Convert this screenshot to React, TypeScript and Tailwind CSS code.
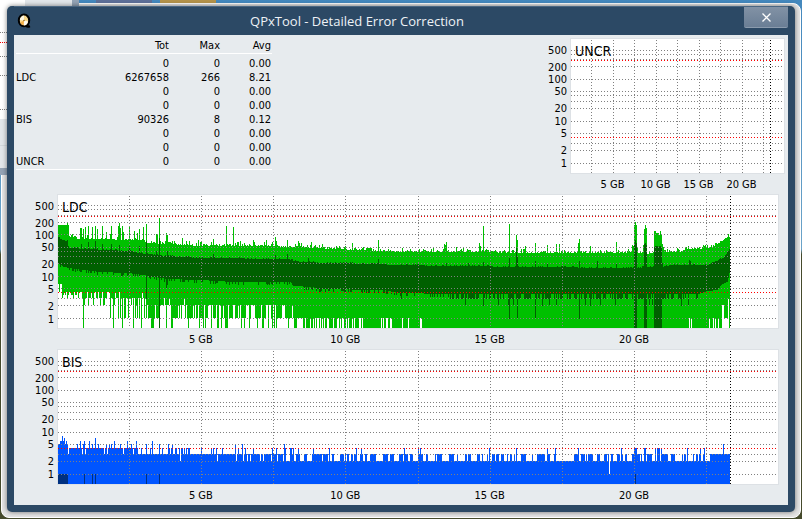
import clsx from "clsx";

type Point = [number, number];

type Band = { top: number; bottom: number };

type PlotProps = {
  title: string;
  width: number;
  height: number;
  gridX: number[];
  endX: number;
  gridY: number[];
  limitY: number[];
  children?: React.ReactNode;
  className?: string;
};

const COLUMNS = 672;

const SCALE = [
  { label: "500", className: "mt-[5px]" },
  { label: "200", className: "mt-[5px]" },
  { label: "100", className: "" },
  { label: "50", className: "" },
  { label: "20", className: "mt-[5px]" },
  { label: "10", className: "mt-px" },
  { label: "5", className: "" },
  { label: "2", className: "mt-[5px]" },
  { label: "1", className: "mt-px" },
];

const CAPACITY = ["5 GB", "10 GB", "15 GB", "20 GB"];

const ROWS = [
  ["", "0", "0", "0.00"],
  ["LDC", "6267658", "266", "8.21"],
  ["", "0", "0", "0.00"],
  ["", "0", "0", "0.00"],
  ["BIS", "90326", "8", "0.12"],
  ["", "0", "0", "0.00"],
  ["", "0", "0", "0.00"],
  ["UNCR", "0", "0", "0.00"],
];

const GRID_Y = [11, 15, 20, 27, 40, 52, 56, 62, 69, 82, 94, 104, 111, 124];
const GRID_Y_LDC = [10, 14, 20, 27, 39, 52, 56, 61, 68, 81, 93, 103, 110, 123];
const GRID_X = [71, 143, 215, 287, 360, 432, 504, 576, 648];
const GRID_X_SMALL = [20, 42, 63, 85, 106, 128, 149, 171, 192];

function createRandom(seed: number) {
  let s = seed;
  return () => {
    s = (s * 1664525 + 1013904223) % 4294967296;
    return s / 4294967296;
  };
}

function interpolate(points: Point[], x: number) {
  for (let i = 1; i < points.length; i++) {
    const [x0, y0] = points[i - 1];
    const [x1, y1] = points[i];
    if (x <= x1) return y0 + ((y1 - y0) * (x - x0)) / Math.max(1, x1 - x0);
  }
  return points[points.length - 1][1];
}

function pick(r: number, options: Point[]) {
  let sum = 0;
  for (const [value, chance] of options) {
    sum += chance;
    if (r < sum) return value;
  }
  return options[options.length - 1][0];
}

function bandPath(bands: Band[]) {
  return bands.map((b, x) => `M${x} ${b.top}h1V${b.bottom}h-1z`).join("");
}

const LDC_MAX: Point[] = [
  [0, 30], [10, 30], [11, 43], [22, 44], [77, 45], [88, 48], [110, 49], [124, 50],
  [142, 51], [200, 51], [242, 52], [275, 54], [325, 56], [342, 57], [532, 58], [575, 58],
  [590, 59], [606, 57], [622, 57], [632, 54], [649, 54], [659, 49], [665, 46], [670, 42], [671, 43],
];

const LDC_MAX_PEAKS: Point[] = [
  [9, 27], [22, 33], [23, 33], [25, 34], [27, 32], [30, 31], [34, 32], [37, 31], [39, 34],
  [44, 31], [48, 37], [52, 39], [53, 31], [60, 31], [61, 28], [62, 33], [64, 31], [65, 37],
  [71, 31], [76, 36], [79, 38], [81, 34], [85, 32], [88, 29], [98, 39], [99, 39], [101, 23],
  [107, 46], [108, 38], [109, 40], [114, 46], [124, 43], [128, 46], [140, 45], [143, 46],
  [155, 44], [168, 31], [175, 32], [182, 46], [195, 45], [208, 45], [217, 42], [218, 46],
  [229, 45], [240, 46], [253, 47], [294, 48], [313, 53], [320, 45], [386, 49], [387, 50],
  [388, 47], [398, 52], [421, 48], [422, 51], [425, 31], [451, 29], [458, 40], [459, 45],
  [467, 51], [477, 48], [489, 50], [498, 49], [501, 49], [520, 48], [521, 44], [532, 51],
  [558, 47], [574, 50], [575, 51], [576, 30], [577, 27], [578, 30], [579, 52], [585, 50],
  [586, 34], [587, 30], [588, 33], [596, 36], [597, 36], [598, 38], [599, 38], [600, 38],
  [601, 40], [602, 36], [603, 39], [604, 49], [605, 52], [630, 51], [649, 50],
];

const LDC_AVG: Point[] = [
  [0, 42], [2, 44], [8, 46], [10, 51], [11, 53], [30, 54], [70, 56], [88, 59], [109, 61],
  [142, 63], [230, 64], [240, 67], [275, 68], [315, 69], [342, 70], [392, 71], [477, 72],
  [562, 73], [605, 72], [612, 70], [649, 70], [659, 66], [666, 62], [671, 54],
];

const LDC_AVG_PEAKS: Point[] = [
  [9, 45], [23, 49], [30, 47], [37, 46], [44, 49], [53, 49], [61, 50], [71, 51], [81, 51],
  [88, 46], [98, 56], [101, 43], [109, 56], [155, 59], [217, 60], [229, 59], [250, 63],
  [320, 64], [388, 68], [410, 68], [425, 67], [451, 63], [458, 53], [459, 61], [477, 66],
  [489, 69], [521, 66], [539, 66], [558, 68], [576, 50], [577, 45], [578, 48], [586, 49],
  [587, 48], [588, 50], [596, 52], [597, 51], [598, 51], [599, 51], [600, 52], [601, 51],
  [602, 51], [603, 52], [604, 68], [631, 65], [632, 66],
];

const LDC_AVG_LOW: Point[] = [
  [0, 68], [5, 72], [25, 75], [42, 77], [70, 78], [85, 80], [109, 84], [142, 85], [175, 87],
  [232, 87], [235, 91], [255, 92], [258, 94], [325, 95], [342, 98], [390, 99], [640, 99],
  [649, 96], [659, 95], [664, 89], [669, 87], [671, 78],
];

const LDC_AVG_DROPS: Point[] = [
  [88, 104], [101, 133], [108, 94], [109, 90], [425, 111], [451, 124], [459, 123],
  [477, 123], [484, 111], [521, 124], [532, 111], [343, 104], [576, 133], [577, 133],
  [578, 133], [586, 133], [587, 133], [588, 133], [596, 133], [597, 133], [598, 133],
  [599, 133], [600, 133], [601, 133], [602, 133], [603, 133], [623, 111],
];

const LDC_MIN_GAPS: Point[] = [
  [344, 123], [350, 123], [362, 123], [363, 123], [631, 123], [633, 123], [651, 123],
  [655, 123], [657, 123], [660, 123], [664, 110], [665, 110], [666, 123], [667, 123],
  [668, 123], [669, 123], [670, 104],
];

function minLevel(x: number, r: number) {
  if (x < 4) return pick(r, [[97, 0.6], [89, 0.4]]);
  if (x < 24) return pick(r, [[97, 0.4], [100, 0.3], [103, 0.25], [88, 0.05]]);
  if (x < 60) return pick(r, [[103, 0.5], [97, 0.12], [110, 0.14], [123, 0.18], [133, 0.06]]);
  if (x < 88) return pick(r, [[103, 0.35], [97, 0.05], [110, 0.24], [123, 0.26], [133, 0.1]]);
  if (x < 142) return pick(r, [[110, 0.3], [103, 0.04], [123, 0.48], [133, 0.18]]);
  if (x < 235) return pick(r, [[110, 0.35], [123, 0.4], [133, 0.25]]);
  if (x < 290) return pick(r, [[123, 0.4], [133, 0.6]]);
  if (x < 335) return pick(r, [[123, 0.25], [133, 0.75]]);
  return 133;
}

function buildLdc() {
  const random = createRandom(41);
  const maxPeaks = new Map(LDC_MAX_PEAKS);
  const avgPeaks = new Map(LDC_AVG_PEAKS);
  const avgDrops = new Map(LDC_AVG_DROPS);
  const minGaps = new Map(LDC_MIN_GAPS);
  const outer: Band[] = [];
  const inner: Band[] = [];

  for (let x = 0; x < COLUMNS; x++) {
    const lift = pick(random(), [[0, 0.42], [1, 0.34], [2, 0.14], [3, 0.07], [4, 0.03]]);
    const top = maxPeaks.get(x) ?? Math.round(interpolate(LDC_MAX, x)) - (x > 10 ? lift : 0);
    const bottom = minGaps.get(x) ?? minLevel(x, random());
    outer.push({ top, bottom });

    const avgJitter = random() < 0.25 ? 1 : 0;
    const avgTop = avgPeaks.get(x) ?? Math.round(interpolate(LDC_AVG, x)) - avgJitter;
    let drop = pick(random(), [[0, 0.7], [2, 0.2], [3, 0.1]]);
    if (x > 300 && x < 392) drop = random() < 0.3 ? 3 : 0;
    if (x >= 392 && x < 640) drop = pick(random(), [[0, 0.45], [5, 0.49], [11, 0.06]]);
    if (x >= 640) drop = 0;
    const avgBottom = avgDrops.get(x) ?? Math.round(interpolate(LDC_AVG_LOW, x)) + drop;
    inner.push({ top: avgTop, bottom: avgBottom });
  }
  return { outer: bandPath(outer), inner: bandPath(inner) };
}

const BIS_LEVELS = [134, 124, 111, 104, 98, 94, 91, 88, 86];

const BIS_START = [5, 5, 6, 6, 8, 6, 7, 5, 6, 5];

const BIS_PEAKS: Point[] = [
  [19, 5], [22, 6], [25, 5], [26, 6], [31, 6], [34, 5], [37, 7], [40, 5], [48, 5], [51, 5],
  [53, 5], [56, 6], [62, 5], [69, 6], [73, 5], [78, 6], [88, 5], [94, 6], [101, 5], [110, 5],
  [114, 5], [122, 2], [153, 4], [155, 4], [158, 4], [159, 2], [164, 4], [177, 5], [180, 4],
  [184, 5], [187, 4], [195, 4], [214, 4], [218, 4], [226, 5], [227, 4], [232, 4], [233, 4],
  [235, 4], [240, 4], [255, 4], [271, 4], [298, 4], [303, 4], [346, 4], [360, 4], [362, 4],
  [431, 4], [458, 4], [489, 4], [497, 4], [520, 4], [551, 1], [563, 4], [576, 4], [577, 4],
  [578, 4], [586, 4], [587, 4], [597, 4], [599, 4], [600, 4], [601, 4], [603, 4], [629, 4],
  [642, 4], [646, 4], [665, 5],
];

function buildBis() {
  const random = createRandom(7);
  const peaks = new Map(BIS_PEAKS);
  const bands: Band[] = [];
  let level = 3;

  for (let x = 0; x < COLUMNS; x++) {
    const r = random();
    if (x < 80) level = pick(r, [[4, 0.82], [3, 0.18]]);
    else if (x < 145) level = pick(r, [[3, 0.8], [4, 0.2]]);
    else if (x < 225) level = pick(r, [[3, 0.86], [2, 0.14]]);
    else if (x >= 655) level = 3;
    else if (random() < 0.6) level = pick(r, x < 270 ? [[3, 0.55], [2, 0.45]] : [[3, 0.42], [2, 0.58]]);
    const value = BIS_START[x] ?? peaks.get(x) ?? level;
    bands.push({ top: BIS_LEVELS[value], bottom: 134 });
  }
  return bandPath(bands);
}

const ldc = buildLdc();
const bis = buildBis();

function Plot({ title, width, height, gridX, endX, gridY, limitY, children, className }: PlotProps) {
  return (
    <figure className={clsx("flex gap-[3px]", className)}>
      <div className="flex w-10 shrink-0 flex-col pt-[2px] text-right text-[11px] leading-3">
        {SCALE.map((tick) => (
          <span key={tick.label} className={tick.className}>
            {tick.label}
          </span>
        ))}
      </div>
      <div className="min-w-0 flex-1">
        <div className="relative border border-[#dde1e5] bg-white">
          <svg
            className="block w-full"
            height={height}
            viewBox={`0 0 ${width} ${height}`}
            preserveAspectRatio="none"
            shapeRendering="crispEdges"
            aria-hidden="true"
          >
            {children}
            <g strokeWidth="1" strokeDasharray="1 2" fill="none">
              {gridY.map((y) => (
                <path key={y} stroke="#808080" d={`M0 ${y + 0.5}H${width - 1}`} />
              ))}
              {gridX.map((x) => (
                <path key={x} stroke="#808080" d={`M${x + 0.5} 1V${height}`} />
              ))}
              {limitY.map((y) => (
                <path key={y} stroke="#ff0000" d={`M0 ${y + 0.5}H${width - 1}`} />
              ))}
              <path stroke="#000" d={`M${endX + 0.5} 1V${height}`} />
            </g>
          </svg>
          <figcaption className="absolute top-1 left-1 text-[14px] leading-4">{title}</figcaption>
        </div>
        <div className="flex h-5 items-center pt-px pl-[10%] text-[11px] leading-3">
          {CAPACITY.map((label) => (
            <span key={label} className="w-2/9 shrink-0 pr-px text-center whitespace-nowrap">
              {label}
            </span>
          ))}
        </div>
      </div>
    </figure>
  );
}

function Desktop() {
  return (
    <div
      className="absolute inset-0 overflow-hidden bg-linear-to-b from-[#4488bd] from-0% via-[#6ba3c8] via-48% to-[#454a2c] to-49%"
      aria-hidden="true"
    >
      <div className="absolute top-0 left-24 h-1 w-14 bg-[#5d6f98]" />
      <div className="absolute top-0 left-40 h-1 w-14 bg-[#b3924a]" />
      <div className="absolute inset-x-px top-[3px] bottom-px rounded-lg border border-white bg-[#e4e4e4]" />
      <div className="absolute top-0 left-0 h-[175px] w-[79px] border-r-[7px] border-b-[7px] border-[#94a3b5] bg-[#e2e6ea]">
        <div className="h-[119px] w-[25px] bg-white pt-8">
          <div className="border-t border-dotted border-[#808080]" />
          <div className="mt-[9px] border-t border-dotted border-[#f00000]" />
          <div className="mt-[13px] border-t border-dotted border-[#808080]" />
          <div className="mt-[18px] border-t border-dotted border-[#808080]" />
          <div className="mt-[33px] border-t border-dotted border-[#808080]" />
        </div>
        <div className="mt-[26px] border-t border-[#d3d8dc]" />
      </div>
    </div>
  );
}

function AppIcon() {
  return (
    <svg className="h-4 w-4" viewBox="0 0 16 16" aria-hidden="true">
      <path d="M8.500 12.500 9.500 14Q11.500 15.300 14.300 14.200L13.800 12.600 11.500 12z" fill="#000" />
      <ellipse cx="8" cy="7.400" rx="5.200" ry="5.900" fill="#f8d88c" stroke="#000" strokeWidth="2" />
      <path d="M8 7.500 3.900 7C4 4.500 5.500 2.500 8 2.400z" fill="#fff6df" />
      <path d="M8 7.500 12 8.500C11.500 11 10 12.400 8 12.400z" fill="#fffbf0" />
      <path d="M8 7.500 4.200 9.500C5 11.500 6 12.200 7.500 12.300z" fill="#f3b04c" />
      <circle cx="8" cy="7.500" r="0.800" fill="#8a6a30" />
    </svg>
  );
}

function TitleBar() {
  return (
    <header className="flex h-[29px] shrink-0 items-start border-t border-[#4a6682]">
      <div className="w-11 pt-[6px] pl-[2px]">
        <AppIcon />
      </div>
      <h1 className="flex-1 pt-[5px] pr-[88px] text-center font-['Open_Sans','Noto_Sans',sans-serif] text-[13px] leading-[18px] text-[#eef2f6]">
        QPxTool - Detailed Error Correction
      </h1>
      <button
        type="button"
        aria-label="Close"
        className="flex h-[21px] w-11 items-center justify-center rounded-b-[2px] border-b border-[#8b9bad] bg-linear-to-b from-[#8292a5] to-[#6a7e95]"
      >
        <svg width="9" height="9" viewBox="0 0 9 9" aria-hidden="true">
          <path d="M0.500 0.500 8.500 8.500M8.500 0.500 0.500 8.500" stroke="#fff" strokeWidth="1.300" />
        </svg>
      </button>
    </header>
  );
}

function Summary() {
  return (
    <table className="ml-[2px] w-64 table-fixed border-separate border-spacing-0 self-start text-right text-[11px] leading-[14px]">
      <thead>
        <tr>
          <th className="h-4 border-b border-white p-0 font-normal" />
          <th className="w-24 border-b border-white p-0 pr-[2px] font-normal">Tot</th>
          <th className="w-[51px] border-b border-white p-0 pr-[2px] font-normal">Max</th>
          <th className="w-[50px] border-b border-white p-0 pr-px font-normal">Avg</th>
        </tr>
      </thead>
      <tbody className="before:block before:h-[3px]">
        {ROWS.map(([name, total, max, avg], i) => {
          const line = i === ROWS.length - 1 && "border-b border-white";
          return (
            <tr key={i}>
              <th className={clsx("p-0 text-left font-normal", line)}>{name}</th>
              <td className={clsx("p-0 pr-[2px]", line)}>{total}</td>
              <td className={clsx("p-0 pr-[2px]", line)}>{max}</td>
              <td className={clsx("p-0 pr-px", line)}>{avg}</td>
            </tr>
          );
        })}
      </tbody>
    </table>
  );
}

export default function App() {
  return (
    <div className="relative isolate flex min-h-screen p-[7px] pt-[6px] font-['DejaVu_Sans_Condensed','Noto_Sans',sans-serif] text-black">
      <Desktop />
      <section className="relative flex flex-1 flex-col rounded-[5px] bg-[#2c4965] px-[7px] pb-[7px] shadow-[0_0_5px_rgba(0,0,0,0.5)]">
        <TitleBar />
        <main className="flex-1 bg-[#e7ebee] pt-[3px]">
          <div className="flex justify-between">
            <Summary />
            <Plot
              title="UNCR"
              width={213}
              height={134}
              gridX={GRID_X_SMALL}
              endX={199}
              gridY={GRID_Y}
              limitY={[21, 98]}
              className="w-[261px] shrink-0 pr-[3px]"
            />
          </div>
          <Plot
            title="LDC"
            width={720}
            height={133}
            gridX={GRID_X}
            endX={672}
            gridY={GRID_Y_LDC}
            limitY={[21, 97]}
            className="pr-[9px]"
          >
            <path fill="#00c000" d={ldc.outer} />
            <path fill="#006000" d={ldc.inner} />
          </Plot>
          <Plot
            title="BIS"
            width={720}
            height={134}
            gridX={GRID_X}
            endX={672}
            gridY={GRID_Y}
            limitY={[21, 98]}
            className="pr-[9px]"
          >
            <path fill="#0055ff" d={bis} />
            <path
              fill="#003080"
              d="M0 124h10v10h-10zM26 124h1v10h-1zM34 124h1v10h-1zM37 124h1v10h-1zM88 124h1v10h-1zM101 124h1v10h-1zM577 124h1v10h-1z"
            />
          </Plot>
        </main>
      </section>
    </div>
  );
}
